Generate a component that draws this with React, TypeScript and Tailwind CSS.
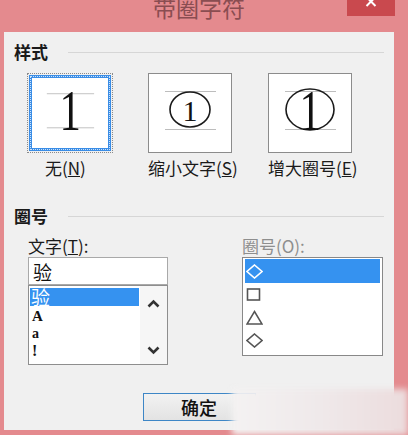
import type { ReactNode } from "react";

const cjk = "font-['Noto_Sans_CJK_SC','Noto_Sans',sans-serif]";

const GuideLines = ({ rx, ry }: { rx?: number; ry?: number }) => (
  <svg
    className="pointer-events-none absolute inset-0"
    width="100%"
    height="100%"
    viewBox="0 0 82 78"
    preserveAspectRatio="none"
  >
    <line x1="16" y1="17.5" x2="67" y2="17.5" stroke="#bdbdbd" strokeWidth="1" />
    <line x1="16" y1="55.5" x2="67" y2="55.5" stroke="#bdbdbd" strokeWidth="1" />
    {rx && ry ? (
      <ellipse cx="41" cy="35.5" rx={rx} ry={ry} fill="none" stroke="#1a1a1a" strokeWidth="1.6" />
    ) : null}
  </svg>
);

type Ring = "none" | "small" | "large";

const StyleOption = ({
  children,
  label,
  ring,
  labelClass,
}: {
  children: ReactNode;
  label: ReactNode;
  ring: Ring;
  labelClass?: string;
}) => (
  <div className="flex w-[84px] flex-col">
    {ring === "none" ? (
      <div className="-mx-px h-[80px] border border-dotted border-[#8a8a8a] p-px">
        <div className="relative flex h-full items-center justify-center border-[3px] border-[#3a8de6] bg-white outline outline-1 outline-dotted -outline-offset-2 outline-[#cfe3fa]">
          <GuideLines />
          {children}
        </div>
      </div>
    ) : (
      <div className="relative flex h-[80px] items-center justify-center border border-[#8c8c8c] bg-white">
        <GuideLines rx={ring === "small" ? 20 : 24} ry={ring === "small" ? 17.5 : 20.5} />
        {children}
      </div>
    )}
    <div className={`mt-[5px] whitespace-nowrap text-[17px] leading-[20px] text-[#1a1a1a] ${cjk} ${labelClass ?? ""}`}>
      {label}
    </div>
  </div>
);

const SectionHeader = ({ title }: { title: string }) => (
  <div className="flex h-[20px] items-center">
    <span className={`text-[17px] font-bold leading-[20px] text-[#1a1a1a] ${cjk}`}>{title}</span>
    <div className="ml-[20px] mr-[10px] h-px flex-1 bg-[#d6d6d6]" />
  </div>
);

const Diamond = ({ color }: { color: string }) => (
  <svg width="17" height="15" viewBox="0 0 17 15">
    <path d="M8.5 1 L16 7.5 L8.5 14 L1 7.5 Z" fill="none" stroke={color} strokeWidth="1.6" />
  </svg>
);

const Square = () => (
  <svg width="15" height="13" viewBox="0 0 15 13">
    <rect x="1.5" y="1" width="12" height="11" fill="none" stroke="#555" strokeWidth="1.6" />
  </svg>
);

const Triangle = () => (
  <svg width="17" height="15" viewBox="0 0 17 15">
    <path d="M8.5 1.5 L16 14 L1 14 Z" fill="none" stroke="#555" strokeWidth="1.5" />
  </svg>
);

const Chevron = ({ down }: { down?: boolean }) => (
  <svg width="13" height="9" viewBox="0 0 13 9">
    <path
      d={down ? "M1.5 1.5 L6.5 6.5 L11.5 1.5" : "M1.5 7.5 L6.5 2.5 L11.5 7.5"}
      fill="none"
      stroke="#333"
      strokeWidth="2.6"
    />
  </svg>
);

export default function App() {
  return (
    <div className="relative flex h-[435px] w-[408px] flex-col overflow-hidden bg-[#e48a8e]">
      {/* title bar */}
      <div className="relative flex h-[32px] shrink-0 justify-center pr-[10px]">
        <span className={`-mt-[5px] text-[23px] leading-[24px] text-[#8a4d51] ${cjk}`}>带圈字符</span>
        <div className="absolute right-[13px] top-0 flex h-[16px] w-[48px] items-start justify-center bg-[#c9494e]">
          <svg width="12" height="10" viewBox="0 0 12 10" className="-mt-[3px]">
            <path d="M1.5 0 L10.5 9 M10.5 0 L1.5 9" stroke="#fff" strokeWidth="2" />
          </svg>
        </div>
      </div>

      {/* dialog body */}
      <div className="ml-[4px] mr-[14px] flex h-[398px] flex-col bg-[#f0f0f0] pl-[10px] pt-[10px]">
        <SectionHeader title="样式" />

        <div className="ml-[14px] mt-[11px] flex gap-[36px]">
          <StyleOption
            ring="none"
            label={
              <>
                无(<u>N</u>)
              </>
            }
            labelClass="pl-[17px]"
          >
            <span className="relative -mt-[5px] scale-x-[0.75] font-['Liberation_Serif',serif] text-[57px] leading-none text-[#111]">
              1
            </span>
          </StyleOption>
          <StyleOption
            ring="small"
            label={
              <>
                缩小文字(<u>S</u>)
              </>
            }
          >
            <span className="relative -mt-[5px] font-['Liberation_Serif',serif] text-[30px] leading-none text-[#111]">
              1
            </span>
          </StyleOption>
          <StyleOption
            ring="large"
            label={
              <>
                增大圈号(<u>E</u>)
              </>
            }
          >
            <span className="relative -mt-[5px] scale-x-[0.75] font-['Liberation_Serif',serif] text-[57px] leading-none text-[#111]">
              1
            </span>
          </StyleOption>
        </div>

        <div className="mt-[28px]">
          <SectionHeader title="圈号" />
        </div>

        <div className="ml-[14px] mt-[10px] flex gap-[74px]">
          {/* text column */}
          <div className="flex w-[140px] flex-col">
            <div className={`h-[21px] text-[17px] leading-[20px] text-[#1a1a1a] ${cjk}`}>
              文字(<u>T</u>):
            </div>
            <div className="flex h-[28px] items-center border border-[#a9a9a9] bg-white pl-[4px]">
              <span className={`text-[19px] leading-none text-[#111] ${cjk}`}>验</span>
            </div>
            <div className="flex h-[80px] border border-[#8e8e8e] bg-white">
              <div className="flex flex-1 flex-col overflow-hidden px-px pt-[2px]">
                <div className="h-[18px] bg-[#3592f0] pl-px">
                  <span className={`block text-[19px] leading-[18px] text-white ${cjk}`}>验</span>
                </div>
                <div className="flex h-[18px] items-end pl-[2px] font-['Liberation_Serif',serif] text-[15px] font-bold leading-[16px] text-[#111]">
                  A
                </div>
                <div className="flex h-[18px] items-end pl-[2px] font-['Liberation_Serif',serif] text-[14px] font-bold leading-[16px] text-[#111]">
                  a
                </div>
                <div className="flex h-[18px] items-end pl-[2px] font-['Liberation_Serif',serif] text-[16px] font-bold leading-[18px] text-[#111]">
                  !
                </div>
              </div>
              <div className="flex w-[27px] flex-col items-center justify-between bg-[#f6f6f6] pb-[9px] pt-[13px]">
                <Chevron />
                <Chevron down />
              </div>
            </div>
          </div>

          {/* enclosure column */}
          <div className="flex w-[141px] flex-col">
            <div className={`h-[21px] text-[17px] leading-[20px] text-[#8e8e8e] ${cjk}`}>圈号(O):</div>
            <div className="flex h-[99px] flex-col border border-[#888] bg-white p-[2px] pt-px">
              <div className="flex h-[24px] items-center bg-[#3592f0] pl-px">
                <Diamond color="#ffffff" />
              </div>
              <div className="flex h-[23px] items-center pl-px">
                <Square />
              </div>
              <div className="flex h-[23px] items-center pl-px">
                <Triangle />
              </div>
              <div className="flex h-[23px] items-center pl-px">
                <Diamond color="#555" />
              </div>
            </div>
          </div>
        </div>

        <div className="mt-[28px] flex justify-center pr-[10px]">
          <button
            className={`flex h-[28px] w-[113px] items-center justify-center border border-[#3d86c6] bg-gradient-to-b from-[#f2f2f2] to-[#e3e3e3] text-[18px] font-medium leading-none text-[#111] ${cjk}`}
          >
            确定
          </button>
        </div>
      </div>

      {/* blurred watermark in the corner */}
      <div className="absolute left-[232px] top-[389px] h-[46px] w-[176px] bg-gradient-to-r from-[#f4f2f2] via-[#efe9ea] to-[#ecdcdd] blur-[3px]" />
    </div>
  );
}
